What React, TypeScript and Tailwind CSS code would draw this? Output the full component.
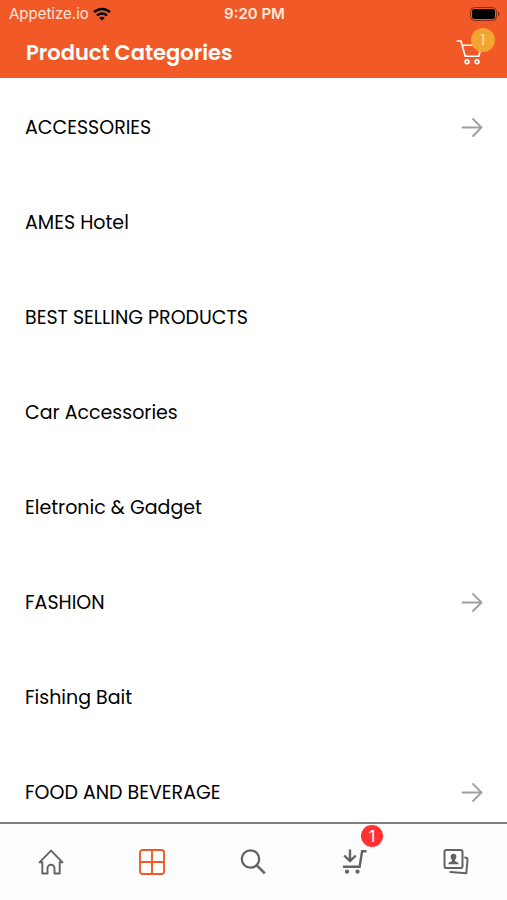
import clsx from "clsx"

const categories = [
  { label: "ACCESSORIES", hasChildren: true },
  { label: "AMES Hotel", hasChildren: false },
  { label: "BEST SELLING PRODUCTS", hasChildren: false },
  { label: "Car Accessories", hasChildren: false },
  { label: "Eletronic & Gadget", hasChildren: false },
  { label: "FASHION", hasChildren: true },
  { label: "Fishing Bait", hasChildren: false },
  { label: "FOOD AND BEVERAGE", hasChildren: true },
]

const WifiIcon = () => (
  <svg viewBox="0 0 18 14" className="h-[14px] w-[18px]" fill="none" stroke="#000" strokeWidth="2.4">
    <path d="M1 5.2C5.4.9 12.6.9 17 5.2" />
    <path d="M4 8.5c2.8-2.7 7.2-2.7 10 0" />
    <path d="M9 13.6 6.2 10.8c1.6-1.5 4-1.5 5.6 0z" fill="#000" stroke="none" />
  </svg>
)

const BatteryIcon = () => (
  <svg viewBox="0 0 30 14" className="h-[14px] w-[30px]">
    <rect x="0.5" y="0.5" width="26" height="13" rx="4" fill="none" stroke="#8c2f10" />
    <rect x="2" y="2" width="23" height="10" rx="2.5" fill="#000" />
    <path d="M28 4.7c2 .8 2 3.8 0 4.6z" fill="#8c2f10" />
  </svg>
)

const CartIcon = () => (
  <svg viewBox="0 0 27 26" className="h-[26px] w-[27px]" fill="none" stroke="#fff" strokeWidth="1.6" strokeLinecap="round" strokeLinejoin="round">
    <path d="M1.2 1H5l4.2 15.200h13.600L25.700 5.200H6.200" />
    <circle cx="11" cy="21.800" r="1.900" />
    <circle cx="21" cy="21.800" r="1.900" />
  </svg>
)

const ArrowIcon = () => (
  <svg viewBox="0 0 22 20" className="h-5 w-[22px]" fill="none" stroke="#a0a0a0" strokeWidth="1.8" strokeLinecap="round" strokeLinejoin="round">
    <path d="M1.5 9.5h19M12 1l8.500 8.500L12 18" />
  </svg>
)

const HomeIcon = () => (
  <svg viewBox="0 0 26 26" className="size-[26px]" fill="none" stroke="currentColor" strokeWidth="1.9" strokeLinecap="round" strokeLinejoin="round">
    <path d="M1.5 13.3 13 1.6l11.5 11.7h-2.8v11.2h-5.2v-5.3a3.5 3.5 0 0 0-7 0v5.3H4.3V13.3z" />
  </svg>
)

const GridIcon = () => (
  <svg viewBox="0 0 26 26" className="size-[26px]" fill="none" stroke="currentColor" strokeWidth="1.9">
    <rect x="1" y="1" width="24" height="24" rx="2.5" />
    <path d="M13 1v24M1 13h24" />
  </svg>
)

const SearchIcon = () => (
  <svg viewBox="0 0 26 26" className="size-[26px]" fill="none" stroke="currentColor">
    <circle cx="10.5" cy="10" r="8.7" strokeWidth="2.2" />
    <path d="m16.8 16.3 8 8" strokeWidth="2.6" />
  </svg>
)

const OrdersIcon = () => (
  <svg viewBox="0 0 26 26" className="size-[26px]" fill="none" stroke="currentColor" strokeWidth="2.4">
    <path d="M24.5 2.2h-4.4L17.600 17.800H1" />
    <path d="M8 .5v11.500M2.200 6.500 8 12l5.800-5.500" />
    <circle cx="5" cy="22.700" r="2.100" fill="currentColor" stroke="none" />
    <circle cx="15.500" cy="22.700" r="2.100" fill="currentColor" stroke="none" />
  </svg>
)

const ProfileIcon = () => (
  <svg viewBox="0 0 26 26" className="size-[26px]" fill="none" stroke="currentColor" strokeWidth="2" strokeLinecap="round" strokeLinejoin="round">
    <rect x="1.5" y="1" width="18" height="18" rx="1.8" />
    <path d="M22.2 8.6c1.700 0 2.400.8 2.300 2.200l-1.200 13.400L7.300 23" />
    <path d="M10.5 4.800c3.800 0 3.300 4.400 1.500 6.100v1.100c0 .8 3.700.8 3.700 3.300H5.300c0-2.500 3.700-2.500 3.700-3.300v-1.100C7.200 9.200 6.700 4.800 10.500 4.800z" fill="currentColor" stroke="none" />
  </svg>
)

const tabs = [
  { label: "Home", icon: HomeIcon },
  { label: "Categories", icon: GridIcon, active: true },
  { label: "Search", icon: SearchIcon },
  { label: "Orders", icon: OrdersIcon, badge: 1 },
  { label: "Profile", icon: ProfileIcon },
]

const App = () => {
  return (
    <div className="flex h-dvh flex-col bg-white font-['Poppins','Inter',sans-serif] text-black">
      <header className="bg-[#f15a27] text-white">
        <div className="grid h-7 grid-cols-3 items-center pr-[7px] pl-[9px] font-['Inter',sans-serif] text-[15px]">
          <div className="flex items-center gap-1 text-[#ffe3d6]">
            Appetize.io
            <WifiIcon />
          </div>
          <div className="text-center font-semibold text-[#ffe9dc]">9:20 PM</div>
          <div className="flex justify-end">
            <BatteryIcon />
          </div>
        </div>
        <div className="flex h-[50px] items-center justify-between pr-6 pl-[26px]">
          <h1 className="text-[21px] font-semibold">Product Categories</h1>
          <button type="button" aria-label="Cart" className="relative">
            <CartIcon />
            <span className="absolute -top-3 -right-3 flex size-6 items-center justify-center rounded-full bg-[#f2a52f] text-sm text-[#ffe9c8]">
              1
            </span>
          </button>
        </div>
      </header>

      <main className="min-h-0 flex-1 overflow-y-auto pt-0.5 [scrollbar-width:none]">
        <ul>
          {categories.map((category) => (
            <li key={category.label}>
              <button
                type="button"
                className="flex h-[95px] w-full items-center justify-between pr-6 pl-[25px] text-left text-[19px]"
              >
                <span className="pt-0.5">{category.label}</span>
                {category.hasChildren && <ArrowIcon />}
              </button>
            </li>
          ))}
        </ul>
      </main>

      <nav className="grid h-[78px] grid-cols-5 border-t-2 border-[#808080] bg-[#fdfdfd]">
        {tabs.map((tab) => (
          <button
            key={tab.label}
            type="button"
            aria-label={tab.label}
            className={clsx(
              "flex items-center justify-center",
              tab.active ? "text-[#f15a27]" : "text-[#636363]"
            )}
          >
            <span className="relative">
              <tab.icon />
              {tab.badge && (
                <span className="absolute -top-6 -right-[15px] flex size-[22px] items-center justify-center rounded-full bg-[#ff3131] font-['Inter',sans-serif] text-base text-white">
                  {tab.badge}
                </span>
              )}
            </span>
          </button>
        ))}
      </nav>
    </div>
  )
}

export default App
